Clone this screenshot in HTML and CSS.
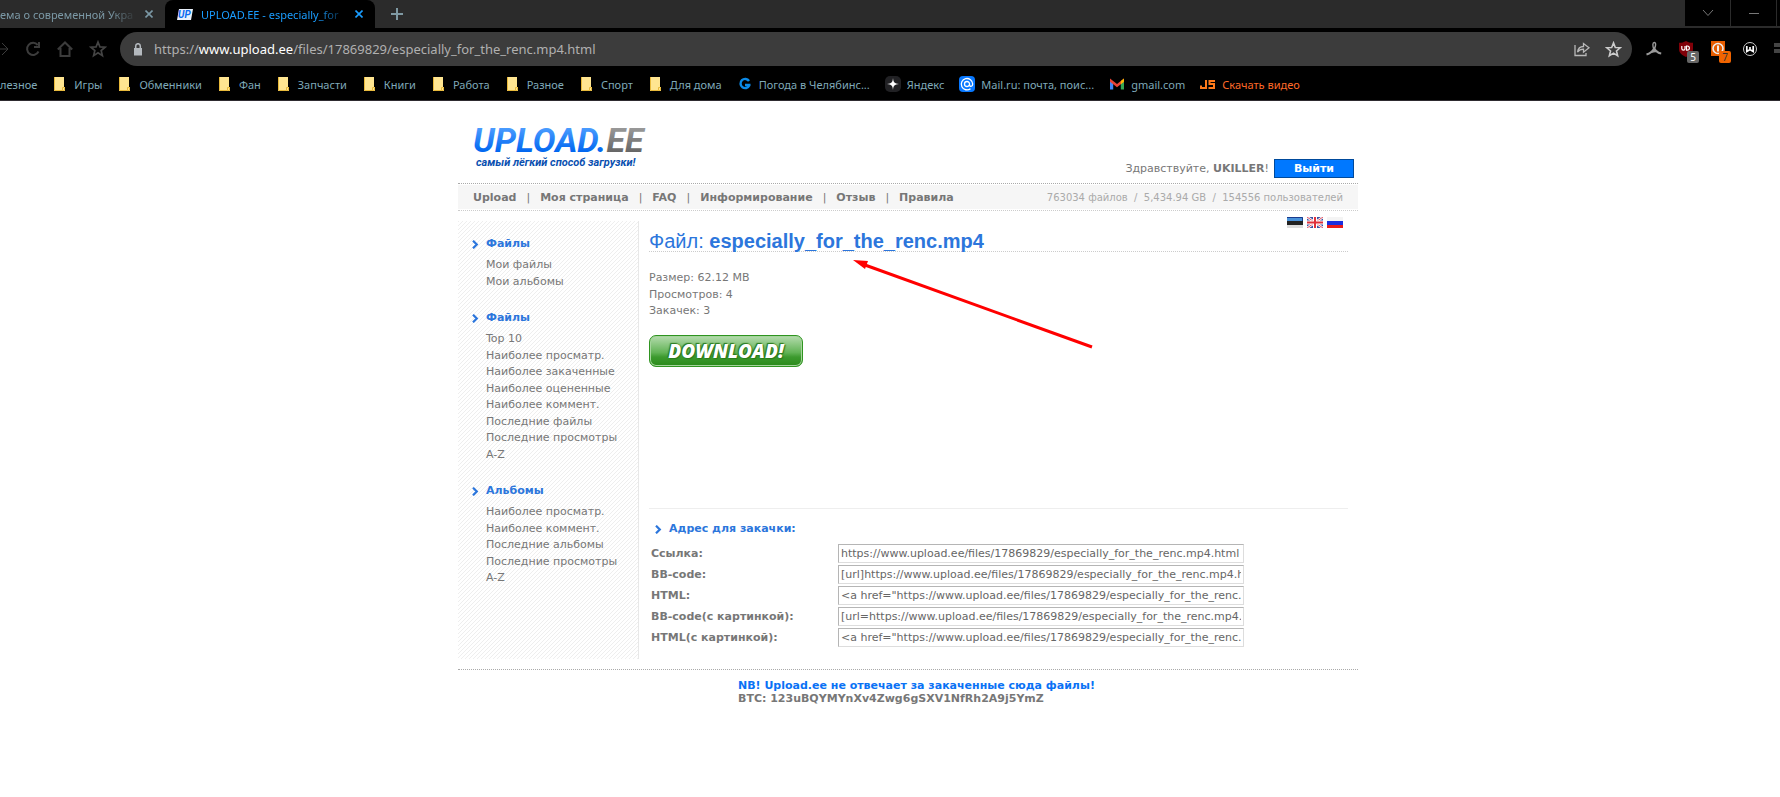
FILE: index.html
```html
<!DOCTYPE html>
<html lang="ru">
<head>
    <meta charset="utf-8">
    <title>UPLOAD.EE - especially_for_the_renc.mp4</title>
    <link rel="stylesheet" href="styles.css">
</head>
<body>
    <svg class="defs" width="0" height="0">
        <symbol id="folder" viewBox="0 0 16 16"><path fill="#ffe591" d="M2 1h10v10h1v4H2z"/><path fill="none" stroke="#e8b93a" d="M2.500 1v13.500h8M10.500 14.500v-3h2v3z"/></symbol>
        <symbol id="chev" viewBox="0 0 7 9"><path fill="none" stroke="#2c76dc" stroke-width="2.200" d="M1 .7l3.800 3.800L1 8.300"/></symbol>
        <symbol id="star" viewBox="0 0 16 16"><path fill="none" stroke="currentColor" stroke-width="1.500" d="M8 1.800l1.700 4.300 4.600.3-3.500 3 1.100 4.500L8 11.400l-3.900 2.500 1.100-4.500-3.500-3 4.600-.3z"/></symbol>
        <symbol id="cross" viewBox="0 0 8 8"><path fill="none" stroke="currentColor" stroke-width="1.600" d="M.5.5l7 7M7.500.5l-7 7"/></symbol>
    </svg>

    <div class="browser">
        <div class="tabs">
            <div class="tab first">
                <span class="tab-title">ема о современной Укра</span>
                <button class="close" aria-label="Close"><svg width="8" height="8"><use href="#cross"/></svg></button>
            </div>
            <div class="tab active">
                <svg class="favicon" width="16" height="16" viewBox="0 0 16 16"><path d="M2 3h14l-2 11H0z" fill="#e8f0fa"/><text x="1" y="12" class="favicon-text">UP</text></svg>
                <span class="tab-title">UPLOAD.EE - especially_for</span>
                <button class="close" aria-label="Close"><svg width="8" height="8"><use href="#cross"/></svg></button>
            </div>
            <button class="new-tab" aria-label="New tab"><svg width="12" height="12" viewBox="0 0 12 12"><path fill="none" stroke="#7f99a3" stroke-width="2" d="M6 0v12M0 6h12"/></svg></button>
            <div class="window-buttons">
                <button aria-label="Search tabs"><svg width="12" height="8" viewBox="0 0 12 8"><path d="M1 1l5 5.500 5-5.500"/></svg></button>
                <button aria-label="Minimize"><svg width="12" height="8" viewBox="0 0 12 8"><path d="M1 4.500h10"/></svg></button>
                <button aria-label="Maximize"></button>
            </div>
        </div>

        <div class="toolbar">
            <div class="nav-icons">
                <svg width="9" height="16" viewBox="0 0 9 16"><path d="M0 8h8M2 2l6 6-6 6"/></svg>
                <svg width="16" height="16" viewBox="0 0 16 16"><path stroke-width="2" d="M13.500 10.500a6 6 0 1 1-.8-6.500M14 1v5H9"/></svg>
                <svg width="16" height="16" viewBox="0 0 16 16"><path stroke-width="2" d="M.8 8.500L8 1.500l7.200 7M3.500 7v8h9V7"/></svg>
                <svg width="18" height="18" class="star"><use href="#star"/></svg>
            </div>
            <div class="address">
                <svg width="10" height="13" viewBox="0 0 10 13"><path fill="#b4b9be" d="M1 5h8v7.500H1z"/><path fill="none" stroke="#b4b9be" stroke-width="1.500" d="M2.700 5.500V3a2.300 2.300 0 0 1 4.600 0v2.500"/></svg>
                <div class="url">https://<span>www.upload.ee</span>/files/17869829/especially_for_the_renc.mp4.html</div>
                <svg width="16" height="16" viewBox="0 0 16 16"><path fill="none" stroke="#b9b9b9" stroke-width="1.300" d="M1 4v10.500h11V12M9.500 2.500v3C6 5.500 4 7.500 3.500 11c1.500-2 3-2.800 6-2.800v3l5.500-4.400z"/></svg>
                <svg width="17" height="17" class="bright"><use href="#star"/></svg>
            </div>
            <div class="extensions">
                <svg width="16" height="16" viewBox="0 0 16 16"><path fill="none" stroke="#999" stroke-width="1.400" d="M7.800 8C6.500 5 6.500 1.500 8.300 1.500S10 5 8.300 8"/><path fill="none" stroke="#999" stroke-width="2.200" d="M.5 13.500C4 12.500 6.500 10.500 8.200 7.500c1.500 2.500 3.500 4.500 7 5M5.500 11c2-.9 4-1 6-.5"/></svg>
                <div class="ext">
                    <svg width="16" height="16" viewBox="0 0 16 16"><path fill="#800008" d="M8 0c2 1.300 4.500 1.800 7 1.800V8c0 4-3 6.300-7 8-4-1.700-7-4-7-8V1.800C3.500 1.800 6 1.300 8 0z"/><path fill="none" stroke="#fff" stroke-width="1.200" d="M3.800 5v2.500a1.600 1.600 0 0 0 3.200 0V5M8.500 5v4.200h.8a2 2 0 0 0 0-4.200z"/></svg>
                    <span class="badge">5</span>
                </div>
                <div class="ext">
                    <svg width="16" height="16" viewBox="0 0 16 16"><path fill="#e65c00" d="M1 0h14v15H1z"/><circle cx="8" cy="7.500" r="5" fill="none" stroke="#eee" stroke-width="1.600"/><path stroke="#eee" stroke-width="2" d="M8 4.500v6"/></svg>
                    <span class="badge orange">7</span>
                </div>
                <svg width="16" height="16" viewBox="0 0 16 16"><circle cx="8" cy="8" r="6.500" fill="none" stroke="#ccc"/><path fill="none" stroke="#fff" stroke-width="1.700" d="M4.800 5v5.500L8 8.500l3.200 2V5M8 6v3"/></svg>
                <svg class="menu" width="16" height="16" viewBox="0 0 16 16"><path fill="#444" d="M0 2h16v4H0zM0 8h16v4H0z"/></svg>
            </div>
        </div>

        <div class="bookmarks">
            <a href="#">лезное</a>
            <a href="#"><svg width="16" height="16"><use href="#folder"/></svg>Игры</a>
            <a href="#"><svg width="16" height="16"><use href="#folder"/></svg>Обменники</a>
            <a href="#"><svg width="16" height="16"><use href="#folder"/></svg>Фан</a>
            <a href="#"><svg width="16" height="16"><use href="#folder"/></svg>Запчасти</a>
            <a href="#"><svg width="16" height="16"><use href="#folder"/></svg>Книги</a>
            <a href="#"><svg width="16" height="16"><use href="#folder"/></svg>Работа</a>
            <a href="#"><svg width="16" height="16"><use href="#folder"/></svg>Разное</a>
            <a href="#"><svg width="16" height="16"><use href="#folder"/></svg>Спорт</a>
            <a href="#"><svg width="16" height="16"><use href="#folder"/></svg>Для дома</a>
            <a href="#"><svg width="16" height="16" viewBox="0 0 16 16"><path fill="none" stroke="#0b8ae8" stroke-width="2.400" d="M12 5A4.600 4.600 0 1 0 12.300 9.500V9H8"/></svg>Погода в Челябинс...</a>
            <a href="#"><svg width="16" height="16" viewBox="0 0 16 16"><rect width="16" height="16" rx="5" fill="#212124"/><path fill="#fff" d="M8 2c.4 4.500 1.500 5.600 6 6-4.500.4-5.600 1.500-6 6-.4-4.500-1.500-5.600-6-6 4.500-.4 5.600-1.500 6-6z"/></svg>Яндекс</a>
            <a href="#"><svg width="16" height="16" viewBox="0 0 16 16"><rect width="16" height="16" rx="4" fill="#0878ff"/><path fill="none" stroke="#fff" stroke-width="1.300" d="M11.500 12.700A5.700 5.700 0 1 1 13.700 8c0 3-3.200 3-3.200.6V8M10.500 8a2.500 2.500 0 1 1-5 0 2.500 2.500 0 0 1 5 0z"/></svg>Mail.ru: почта, поис...</a>
            <a href="#"><svg width="16" height="16" viewBox="0 0 16 16"><path fill="#4285f4" d="M1 4v9.500h3.200V6z"/><path fill="#34a853" d="M15 4v9.500h-3.200V6z"/><path fill="#ea4335" d="M1 2.500L8 8l7-5.500v3.200L8 11.200 1 5.700z"/><path fill="#fbbc04" d="M11.800 5L15 2.500v3.200l-3.200 2.600z"/></svg>gmail.com</a>
            <a href="#" class="hot"><svg width="16" height="16" viewBox="0 0 16 16"><path fill="none" stroke="#ff7a1a" stroke-width="2" d="M6 4v8H1V9.500M15 5H9.500v3H14v4H8.500"/></svg>Скачать видео</a>
        </div>
    </div>

    <div class="page">
        <div class="header">
            <svg class="logo" width="190" height="60" viewBox="0 0 190 60" role="img" aria-label="UPLOAD.EE">
                <defs>
                    <linearGradient id="blue" x1="0" y1="0" x2="0" y2="1"><stop offset=".2" stop-color="#4a9cff"/><stop offset=".8" stop-color="#0066f0"/></linearGradient>
                    <linearGradient id="gray" x1="0" y1="0" x2="0" y2="1"><stop offset=".2" stop-color="#999"/><stop offset=".8" stop-color="#666"/></linearGradient>
                </defs>
                <text x="0" y="34" class="logo-text" fill="url(#blue)">UPLOAD.<tspan fill="url(#gray)">EE</tspan></text>
                <text x="3" y="48" class="logo-slogan">самый лёгкий способ загрузки!</text>
            </svg>
            <div class="user">
                <span>Здравствуйте, <b>UKILLER</b>!</span>
                <button class="logout">Выйти</button>
            </div>
        </div>

        <div class="nav">
            <div class="nav-inner">
                <div class="menu-links">
                    <a href="#">Upload</a><span>|</span>
                    <a href="#">Моя страница</a><span>|</span>
                    <a href="#">FAQ</a><span>|</span>
                    <a href="#">Информирование</a><span>|</span>
                    <a href="#">Отзыв</a><span>|</span>
                    <a href="#">Правила</a>
                </div>
                <div class="stats">763034 файлов &nbsp;/&nbsp; 5,434.94 GB &nbsp;/&nbsp; 154556 пользователей</div>
            </div>
        </div>

        <div class="main">
            <div class="sidebar">
                <h3><svg width="7" height="9"><use href="#chev"/></svg>Файлы</h3>
                <ul class="rows">
                    <li><a href="#">Мои файлы</a></li>
                    <li><a href="#">Мои альбомы</a></li>
                </ul>
                <h3><svg width="7" height="9"><use href="#chev"/></svg>Файлы</h3>
                <ul class="rows">
                    <li><a href="#">Top 10</a></li>
                    <li><a href="#">Наиболее просматр.</a></li>
                    <li><a href="#">Наиболее закаченные</a></li>
                    <li><a href="#">Наиболее оцененные</a></li>
                    <li><a href="#">Наиболее коммент.</a></li>
                    <li><a href="#">Последние файлы</a></li>
                    <li><a href="#">Последние просмотры</a></li>
                    <li><a href="#">A-Z</a></li>
                </ul>
                <h3><svg width="7" height="9"><use href="#chev"/></svg>Альбомы</h3>
                <ul class="rows">
                    <li><a href="#">Наиболее просматр.</a></li>
                    <li><a href="#">Наиболее коммент.</a></li>
                    <li><a href="#">Последние альбомы</a></li>
                    <li><a href="#">Последние просмотры</a></li>
                    <li><a href="#">A-Z</a></li>
                </ul>
            </div>

            <div class="content">
                <div class="flags">
                    <svg width="16" height="11" viewBox="0 0 16 11"><path fill="#4891d9" d="M0 0h16v4H0z"/><path fill="#222" d="M0 4h16v4H0z"/><path fill="#ddd" d="M0 8h16v3H0z"/><path fill="none" stroke="#1a3a8c" d="M0 .5h15.500V4"/></svg>
                    <svg width="16" height="11" viewBox="0 0 16 11"><path fill="#3a4fa0" d="M0 0h16v11H0z"/><path stroke="#fff" stroke-width="2.500" d="M0 0l16 11M16 0L0 11"/><path stroke="#e05060" d="M0 0l16 11M16 0L0 11"/><path stroke="#fff" stroke-width="4" d="M8 0v11M0 5.500h16"/><path stroke="#e0303a" stroke-width="2" d="M8 0v11M0 5.500h16"/></svg>
                    <svg width="16" height="11" viewBox="0 0 16 11"><path fill="#f4f4f4" d="M0 0h16v4H0z"/><path fill="#1a2fe0" d="M0 4h16v4H0z"/><path fill="#e81c1c" d="M0 8h16v3H0z"/></svg>
                </div>
                <h1>Файл: <b>especially_for_the_renc.mp4</b></h1>
                <ul class="info rows">
                    <li>Размер: 62.12 MB</li>
                    <li>Просмотров: 4</li>
                    <li>Закачек: 3</li>
                </ul>
                <button class="download">DOWNLOAD!</button>
                <div class="links">
                    <h3><svg width="7" height="9"><use href="#chev"/></svg>Адрес для закачки:</h3>
                    <table>
                        <tr><th><label for="link">Ссылка:</label></th><td><input id="link" type="text" value="https://www.upload.ee/files/17869829/especially_for_the_renc.mp4.html"></td></tr>
                        <tr><th><label for="bb">BB-code:</label></th><td><input id="bb" type="text" value="[url]https://www.upload.ee/files/17869829/especially_for_the_renc.mp4.html[/url]"></td></tr>
                        <tr><th><label for="html">HTML:</label></th><td><input id="html" type="text" value="&lt;a href=&quot;https://www.upload.ee/files/17869829/especially_for_the_renc.mp4.html&quot;&gt;"></td></tr>
                        <tr><th><label for="bbimg">BB-code(с картинкой):</label></th><td><input id="bbimg" type="text" value="[url=https://www.upload.ee/files/17869829/especially_for_the_renc.mp4.html]"></td></tr>
                        <tr><th><label for="htmlimg">HTML(с картинкой):</label></th><td><input id="htmlimg" type="text" value="&lt;a href=&quot;https://www.upload.ee/files/17869829/especially_for_the_renc.mp4.html&quot;&gt;"></td></tr>
                    </table>
                </div>
                <svg class="arrow" width="240" height="90" viewBox="0 0 240 90"><path stroke="#f00" stroke-width="3" d="M12 5l227 82"/><path fill="#f00" d="M0 0l15 1-3 8z"/></svg>
            </div>
        </div>

        <div class="footer">
            <div class="notice">
                <div class="warning">NB! Upload.ee не отвечает за закаченные сюда файлы!</div>
                <div>BTC: 123uBQYMYnXv4Zwg6gSXV1NfRh2A9j5YmZ</div>
            </div>
        </div>
    </div>
</body>
</html>
```

FILE: styles.css
```css
* {
    box-sizing: border-box;
}
body {
    margin: 0;
    background: #fff;
    color: #777;
    font-family: Verdana, "DejaVu Sans", sans-serif;
    font-size: 11px;
    overflow-x: hidden;
}
a {
    color: inherit;
    text-decoration: none;
}
button {
    border: 0;
    padding: 0;
    background: none;
    font-family: inherit;
    cursor: pointer;
}
svg {
    flex: none;
    display: block;
}
.defs {
    position: absolute;
}

/* browser chrome */
.browser {
    background: #000;
    border-bottom: 1px solid #2e2b30;
    font-family: "Segoe UI", "Noto Sans", sans-serif;
    font-size: 11px;
    overflow: hidden;
}
.tabs {
    display: flex;
    height: 28px;
    background: #2b2b2b;
}
.tab {
    display: flex;
    align-items: center;
    color: #7b98a5;
    padding: 0 12px;
}
.tab.first {
    width: 165px;
    padding-left: 0;
}
.tab.active {
    width: 210px;
    background: #000;
    color: #1a9dff;
    border-radius: 8px 8px 0 0;
}
.tab-title {
    flex: 1;
    overflow: hidden;
    white-space: nowrap;
    mask-image: linear-gradient(to right, #000 80%, transparent);
}
.favicon {
    margin-right: 8px;
}
.favicon-text {
    font: italic bold 10px Roboto, sans-serif;
    fill: #0a6cf0;
}
.close {
    color: inherit;
    margin-left: 8px;
}
.new-tab {
    margin-left: 16px;
}
.window-buttons {
    display: flex;
    gap: 1px;
    height: 26px;
    margin-left: auto;
    margin-right: -42px;
}
.window-buttons button {
    display: flex;
    align-items: center;
    justify-content: center;
    width: 45px;
    background: #000;
}
.window-buttons path {
    fill: none;
    stroke: #777;
}
.toolbar {
    display: flex;
    align-items: center;
    height: 42px;
}
.nav-icons {
    display: flex;
    align-items: center;
    gap: 16px;
    width: 120px;
    color: #444;
}
.nav-icons path {
    fill: none;
    stroke: #3c3c3c;
}
.address {
    flex: 1;
    display: flex;
    align-items: center;
    gap: 15px;
    height: 34px;
    padding: 0 10px 0 13px;
    border-radius: 17px;
    background: #3c3c3c;
}
.url {
    flex: 1;
    font-size: 13px;
    margin-left: -4px;
    color: #b0b0b0;
}
.url span {
    color: #fff;
}
.bright {
    color: #ccc;
}
.extensions {
    display: flex;
    gap: 16px;
    margin: 0 -10px 0 14px;
}
.ext {
    position: relative;
}
.badge {
    position: absolute;
    left: 9px;
    top: 10px;
    width: 12px;
    height: 12px;
    border-radius: 2px;
    background: #666;
    color: #fff;
    font-size: 10px;
    line-height: 12px;
    text-align: center;
}
.badge.orange {
    background: #f06400;
    color: #333;
}
.bookmarks {
    display: flex;
    gap: 15px;
    height: 30px;
    padding-bottom: 2px;
    color: #7fa9b8;
    white-space: nowrap;
}
.bookmarks a {
    display: flex;
    align-items: center;
    gap: 6px;
}
.bookmarks .hot {
    color: #ff6a28;
}

/* page */
.page {
    width: 900px;
    margin: 0 auto;
    position: relative;
    left: 18px;
}
.header {
    display: flex;
    justify-content: space-between;
    align-items: flex-end;
    height: 82px;
    padding: 0 4px 5px 15px;
}
.logo-text {
    font: italic bold 34px Roboto, sans-serif;
}
.logo-slogan {
    font: italic bold 11px Roboto, sans-serif;
    fill: #0a50b0;
}
.user {
    display: flex;
    align-items: center;
    gap: 5px;
}
.logout {
    width: 80px;
    height: 19px;
    border: 1px solid #004a9c;
    background: #0078ff;
    color: #fff;
    font-size: 11px;
    font-weight: bold;
}
.nav {
    border-top: 1px dotted #aaa;
    border-bottom: 1px dotted #ccc;
    padding: 1px 0;
}
.nav-inner {
    display: flex;
    justify-content: space-between;
    align-items: center;
    height: 24px;
    padding: 1px 15px 0;
    background: #f6f6f6;
}
.menu-links {
    display: flex;
    gap: 10px;
}
.menu-links a {
    font-weight: bold;
}
.stats {
    color: #aaa;
    font-size: 10px;
}
.main {
    display: flex;
    margin-top: 1px;
}
.sidebar {
    width: 181px;
    margin-top: 9px;
    padding: 15px 0 0 14px;
    border-right: 1px solid #e8e8e8;
    background: linear-gradient(135deg, #eee 12.5%, #fff 12.5% 50%, #eee 50% 62.5%, #fff 62.5%) 0 0 / 4px 4px;
}
h3 {
    display: flex;
    align-items: center;
    gap: 7px;
    margin: 0 0 5px;
    color: #2c76dc;
    font-size: 11px;
    line-height: 16px;
}
ul {
    margin: 0;
    padding: 0;
    list-style: none;
}
.rows li {
    line-height: 16px;
}
.rows li:nth-child(even) {
    line-height: 17px;
}
.sidebar ul {
    margin-bottom: 20px;
    padding-left: 14px;
}
.content {
    flex: 1;
    position: relative;
    padding: 5px 10px 10px;
}
.flags {
    display: flex;
    justify-content: flex-end;
    gap: 4px;
    padding-right: 5px;
}
h1 {
    margin: 0;
    padding-top: 3px;
    border-bottom: 1px dotted #ccc;
    color: #2c76dc;
    font: 20px/20px Arial, "Liberation Sans", sans-serif;
}
.info {
    margin: 18px 0 16px;
}
.download {
    display: block;
    width: 154px;
    height: 32px;
    border: 1px solid #2f9420;
    border-radius: 7px;
    background: linear-gradient(#b5dcae, #62b356 55%, #3c9a2e 70%, #2a8a1a);
    box-shadow: inset 0 0 0 1px #a5d59c;
    color: #fff;
    font: italic 800 19px/28px "Open Sans", sans-serif;
    text-shadow: 0 0 2px #2a7a1c, 1px 1px 1px #2a7a1c, -1px -1px 1px #2a7a1c;
}
.links {
    margin-top: 141px;
    padding-top: 12px;
    border-top: 1px solid #eee;
}
.links h3 {
    padding-left: 6px;
}
table {
    border-spacing: 2px;
}
th {
    width: 185px;
    padding: 0;
    text-align: left;
}
td {
    padding: 0;
}
input {
    display: block;
    width: 406px;
    height: 19px;
    padding: 0 2px;
    border: 1px solid #ddd;
    border-top-color: #b5b5b5;
    border-left-color: #b5b5b5;
    color: #666;
    font: 11px Verdana, "DejaVu Sans", sans-serif;
}
.arrow {
    position: absolute;
    left: 214px;
    top: 48px;
}
.footer {
    display: flex;
    justify-content: center;
    margin-top: 10px;
    padding: 9px 0 0 30px;
    border-top: 1px dotted #aaa;
    font-weight: bold;
    line-height: 13px;
}
.notice {
    min-width: 370px;
}
.warning {
    color: #0a72f5;
}
```
